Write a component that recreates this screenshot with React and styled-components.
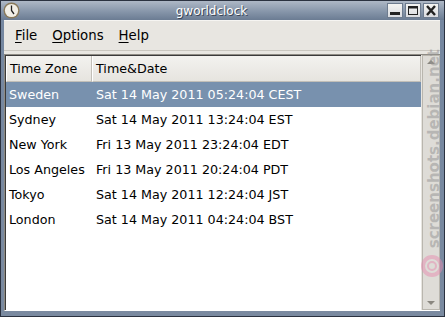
import styled, { createGlobalStyle } from "styled-components";

const GlobalStyle = createGlobalStyle`
  html, body {
    margin: 0;
    padding: 0;
    background: #7a8aa0;
  }
`;

const Window = styled.div`
  width: 445px;
  height: 317px;
  box-sizing: border-box;
  border: 1px solid #2b3240;
  background: linear-gradient(#a9b5c4, #7587a0 20px, #7a8aa0);
  display: flex;
  flex-direction: column;
  padding: 0 4px 5px 3px;
  font-family: "DejaVu Sans", sans-serif;
  font-size: 13px;
  position: relative;
`;

const TitleBar = styled.div`
  height: 19px;
  display: flex;
  align-items: center;
  margin: 0 -4px 0 -3px;
  padding: 0 5px 0 2px;
  background: linear-gradient(#aeb8c6, #8796aa 55%, #6b7c93);
`;

const Title = styled.div`
  flex: 1;
  text-align: center;
  padding-left: 16px;
  color: #ffffff;
  font-size: 12px;
  text-shadow: 1px 1px 0 #3a4556;
`;

const TitleButtons = styled.div`
  display: flex;
  gap: 2px;
`;

const TitleButton = styled.div`
  width: 16px;
  height: 15px;
  box-sizing: border-box;
  border: 1px solid #6d7b8e;
  background: linear-gradient(#f4f4f2, #d9dbe0);
  display: flex;
  align-items: center;
  justify-content: center;
`;

const Client = styled.div`
  flex: 1;
  background: #e8e6e1;
  border-top: 1px solid #f6f5f2;
  display: flex;
  flex-direction: column;
`;

const MenuBar = styled.div`
  height: 29px;
  display: flex;
  align-items: center;
  padding-left: 11px;
  gap: 15px;
  border-bottom: 1px solid #c9c6bf;
  color: #000;
  font-size: 13.3px;
`;

const MenuItem = styled.span`
  & u {
    text-decoration-thickness: 1px;
    text-underline-offset: 2px;
  }
`;

const Frame = styled.div`
  flex: 1;
  margin-top: 3px;
  display: flex;
  border-top: 1px solid #8e8b84;
  border-left: 1px solid #8e8b84;
  border-bottom: 1px solid #fff;
`;

const Tree = styled.div`
  flex: 1;
  background: #ffffff;
  display: flex;
  flex-direction: column;
  border-left: 1px solid #3a3a3a;
  border-top: 1px solid #3a3a3a;
  font-size: 12.7px;
`;

const HeaderRow = styled.div`
  display: flex;
  height: 26px;
`;

const HeaderCell = styled.div`
  width: ${(p) => (p.$grow ? "auto" : "86px")};
  flex: ${(p) => (p.$grow ? 1 : "none")};
  box-sizing: border-box;
  display: flex;
  align-items: center;
  padding-left: 3px;
  background: linear-gradient(#f3f2ef, #e6e4df);
  border-right: 1px solid #c2bfb8;
  border-left: 1px solid #ffffff;
  border-bottom: 1px solid #c2bfb8;
  color: #000;
`;

const Row = styled.div`
  display: flex;
  height: 25px;
  align-items: center;
  background: ${(p) => (p.$selected ? "#7891ae" : "#ffffff")};
  color: ${(p) => (p.$selected ? "#ffffff" : "#000000")};
`;

const Cell = styled.div`
  width: ${(p) => (p.$grow ? "auto" : "87px")};
  flex: ${(p) => (p.$grow ? 1 : "none")};
  box-sizing: border-box;
  padding-left: 3px;
  white-space: nowrap;
`;

const Scrollbar = styled.div`
  width: 18px;
  margin-left: 1px;
  box-sizing: border-box;
  border: 1px solid #b9b6ae;
  background: #dedcd7;
  display: flex;
  flex-direction: column;
  justify-content: space-between;
  align-items: center;
  padding: 4px 0;
`;

const Arrow = styled.div`
  width: 0;
  height: 0;
  border-left: 4px solid transparent;
  border-right: 4px solid transparent;
  ${(p) =>
    p.$up
      ? "border-bottom: 4px solid #8a8780;"
      : "border-top: 4px solid #8a8780;"}
`;

const Watermark = styled.div`
  position: absolute;
  right: 1px;
  top: 48px;
  writing-mode: vertical-rl;
  transform: rotate(180deg);
  font-family: "DejaVu Sans", sans-serif;
  font-weight: bold;
  font-size: 15px;
  color: rgba(150, 150, 150, 0.55);
  pointer-events: none;
`;

const Swirl = styled.div`
  position: absolute;
  right: 1px;
  top: 254px;
  width: 22px;
  height: 22px;
  border-radius: 50%;
  border: 4px solid rgba(230, 140, 175, 0.5);
  box-sizing: border-box;
  display: flex;
  align-items: center;
  justify-content: center;
  &::after {
    content: "";
    width: 6px;
    height: 6px;
    border-radius: 50%;
    border: 2px solid rgba(230, 140, 175, 0.5);
  }
`;

const Clock = () => (
  <svg width="17" height="17" viewBox="0 0 17 17">
    <circle cx="8.5" cy="8.5" r="8" fill="#8a7a5a" />
    <circle cx="8.5" cy="8.5" r="6.6" fill="#f2efe6" />
    <path d="M8.5 3.5 V8.5 L11 12" stroke="#222" strokeWidth="1.3" fill="none" />
  </svg>
);

const rows = [
  ["Sweden", "Sat 14 May 2011 05:24:04 CEST"],
  ["Sydney", "Sat 14 May 2011 13:24:04 EST"],
  ["New York", "Fri 13 May 2011 23:24:04 EDT"],
  ["Los Angeles", "Fri 13 May 2011 20:24:04 PDT"],
  ["Tokyo", "Sat 14 May 2011 12:24:04 JST"],
  ["London", "Sat 14 May 2011 04:24:04 BST"],
];

export default function App() {
  return (
    <>
      <GlobalStyle />
      <Window>
        <TitleBar>
          <Clock />
          <Title>gworldclock</Title>
          <TitleButtons>
            <TitleButton>
              <svg width="12" height="11" viewBox="0 0 12 11">
                <rect x="1" y="7" width="10" height="3" fill="#222" />
              </svg>
            </TitleButton>
            <TitleButton>
              <svg width="12" height="11" viewBox="0 0 12 11">
                <rect x="1.5" y="1.5" width="9" height="8" fill="none" stroke="#222" strokeWidth="1" />
                <rect x="1" y="1" width="10" height="2.5" fill="#222" />
              </svg>
            </TitleButton>
            <TitleButton>
              <svg width="12" height="11" viewBox="0 0 12 11">
                <path d="M2 1 L10 10 M10 1 L2 10" stroke="#222" strokeWidth="2.4" />
              </svg>
            </TitleButton>
          </TitleButtons>
        </TitleBar>
        <Client>
          <MenuBar>
            <MenuItem><u>F</u>ile</MenuItem>
            <MenuItem><u>O</u>ptions</MenuItem>
            <MenuItem><u>H</u>elp</MenuItem>
          </MenuBar>
          <Frame>
            <Tree>
              <HeaderRow>
                <HeaderCell>Time Zone</HeaderCell>
                <HeaderCell $grow>Time&amp;Date</HeaderCell>
              </HeaderRow>
              {rows.map(([zone, date], i) => (
                <Row key={zone} $selected={i === 0}>
                  <Cell>{zone}</Cell>
                  <Cell $grow>{date}</Cell>
                </Row>
              ))}
            </Tree>
            <Scrollbar>
              <Arrow $up />
              <Arrow />
            </Scrollbar>
          </Frame>
        </Client>
        <Watermark>screenshots.debian.net</Watermark>
        <Swirl />
      </Window>
    </>
  );
}
